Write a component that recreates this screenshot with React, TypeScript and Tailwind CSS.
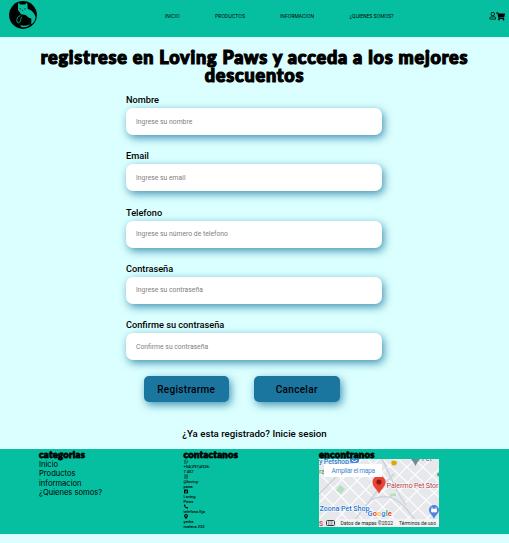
import React from "react";
import { FaRegUser, FaShoppingCart, FaWhatsapp, FaInstagram, FaFacebookSquare, FaPhoneAlt, FaMapMarkerAlt } from "react-icons/fa";

function Logo() {
  return (
    <svg viewBox="0 0 28 28" className="h-7 w-7 shrink-0">
      <circle cx="14" cy="14" r="13.9" fill="#000" />
      <path d="M9.2 1.5 11.2 3.600h4.800l2.200-2.100.6 6.500c4.200 1.200 7.700 5 7.700 9-.6 3.300-2.300 5.200-4.200 6.400V17.500l-3-1c-1.500-2.500-4-3.400-7-3-.8-.7-1.200-1.300-1.400-2.300-1.800-1.200-2.200-3-1.900-5.200Z" fill="#06bfa0" />
      <path d="M11.500 24.300c4 .8 7.700.1 10.200-1.300-2 2.300-5 3.600-8.200 3.300-1.300-.3-2.200-1-2-2Z" fill="#06bfa0" />
      <path d="M18 2c5 1.500 8.700 6 9 11.500" fill="none" stroke="#000" strokeWidth=".8" />
      <path d="M11.400 14.600c-2.700.7-3.700 3-3.500 5.300.1 2 1.700 2.600 2.900 1.300 1.300-1.600.6-4 2.100-5.500" fill="none" stroke="#06bfa0" strokeWidth=".8" />
      <path d="m10.700 7.500 1.500.7M15.200 8.200l1.500-.7M13.200 9.500h1" stroke="#000" strokeWidth=".7" />
    </svg>
  );
}

function Field({ label, placeholder, type = "text" }: { label: string; placeholder: string; type?: string }) {
  return (
    <label className="block h-[56.25px]">
      <span className="block h-[15px] text-[9.2px] leading-[14px] font-medium text-black">{label}</span>
      <input
        type={type}
        placeholder={placeholder}
        className="block h-[27px] w-full rounded-[7px] bg-white px-[10px] text-[6.8px] shadow-[2px_3px_8px_#1a759fc8] outline-none placeholder:text-[#808080]"
      />
    </label>
  );
}

function MapView() {
  return (
    <svg viewBox="0 0 120 68" className="block h-[68px] w-[120px] bg-[#e6e8ec]" fontFamily="Roboto, sans-serif">
      <g stroke="#fff" strokeWidth="1.1" fill="none">
        <path d="M-10 22 48 80M0 14 62 80M8 5 77 76M15-2 90 75M28-4 106 75M42-6 120 70M58-5 125 58M75-4 125 43M91-4 125 28" />
        <path d="M-5 49 48-5M-5 65 64-4M8 70 80-3M24 72 99-3M40 72 120-8M58 72 125 5M76 72 125 24M95 72 125 43" />
      </g>
      <path d="M0 35 35 0M29 70 59 31l16-16M52 41c17-9 30 0 40 15l14 15M63 0c7 12 11 29 24 46" fill="none" stroke="#cdd3dc" strokeWidth="1.5" />
      <path d="m17 31 4-5 5 4-4 5Zm54 4 6-1v3l-6 1Z" fill="#b7dfbd" />
      <text x="0" y="5" fontSize="7.2" fontWeight="500" fill="#2874c8" stroke="#fff" strokeWidth=".8" paintOrder="stroke" textLength="30">y Petshop</text>
      <rect x="31" y="-4" width="9" height="8" rx="2" fill="#4b82e8" /><path d="M33 1c1 2 4 2 5 0" stroke="#fff" fill="none" />
      <ellipse cx="75" cy="4" rx="2.8" ry="2.4" fill="#dca900" />
      <path d="M92 0h9l-3 4-1.500 3L95 4Z" fill="#708997" />
      <text x="103" y="2" fontSize="6.5" fill="#53636c">Pet</text>
      <text x="0" y="15" fontSize="7" fill="#41915b">ra</text>
      <circle cx="120" cy="15.5" r="2" fill="#41a96b" />
      <path d="M60 35c-1-4-6.500-7-6.500-12a6.500 6.500 0 0 1 13 0c0 5-5.500 8-6.500 12" fill="#ea4335" /><circle cx="60" cy="23" r="2.6" fill="#8f1712" />
      <text x="67.5" y="28.500" fontSize="7.4" fill="#b3363c" stroke="#fff" strokeWidth="1" paintOrder="stroke" textLength="52">Palermo Pet Stor</text>
      <text x=".5" y="52" fontSize="7.3" fontWeight="500" fill="#2874c8" stroke="#fff" strokeWidth="1" paintOrder="stroke" textLength="50">Zoona Pet Shop</text>
      <path d="M115 60c-1-4-5-5-5-9a5 5 0 0 1 10 0c0 4-4 5-5 9" fill="#5381db" /><path d="M112.500 50h5v3h-5zM113 50v-2M117 50v-2" fill="#fff" stroke="#fff" strokeWidth=".7" />
      <rect x="5" y="5" width="58" height="13" fill="#fff" /><text x="12.5" y="13.8" fontSize="6.6" fill="#4285d4" textLength="43.5">Ampliar el mapa</text>
      <text x="48.500" y="57" fontSize="7.6" fontWeight="700" stroke="#fff" strokeWidth="1" paintOrder="stroke">
        <tspan fill="#4285f4">G</tspan><tspan fill="#ea4335">o</tspan><tspan fill="#fbbc05">o</tspan><tspan fill="#4285f4">g</tspan><tspan fill="#34a853">l</tspan><tspan fill="#ea4335">e</tspan>
      </text>
      <rect y="60" x="17" width="103" height="8" fill="#f4f5f5" fillOpacity=".88" />
      <text x="0" y="67" fontSize="6.5" fontWeight="700" fill="#d44b49">S</text>
      <rect x="7.500" y="61.500" width="8" height="5" rx="1" fill="#e6e6e6" stroke="#34383c" /><path d="M9 63h5M9 65h5" stroke="#34383c" strokeWidth=".7" strokeDasharray="1 .5" />
      <text x="21.5" y="65.8" fontSize="5" fill="#222" textLength="52.5">Datos de mapas ©2022</text>
      <text x="80" y="65.8" fontSize="5" fill="#222" textLength="37">Términos de uso</text>
    </svg>
  );
}

const footTitle = "h-[10px] whitespace-nowrap font-[Lato] font-black text-[9.5px] leading-[11px] tracking-[0.25px] [-webkit-text-stroke:0.8px_#000]";

export default function App() {
  return (
    <div className="flex h-[543px] w-[509px] flex-col overflow-hidden bg-[#dbffff] font-[Roboto,sans-serif] text-black">
      <header className="flex h-[37px] shrink-0 items-start bg-[#06bfa0] pt-px pl-[9px]">
        <Logo />
        <nav className="flex pt-[11px] pl-[128px] font-[Inter] text-[4.8px] leading-[8px] whitespace-nowrap">
          <a className="w-[50px]">INICIO</a><a className="w-[65px]">PRODUCTOS</a><a className="w-[69.5px]">INFORMACION</a><a className="tracking-[-0.08px]">¿QUIENES SOMOS?</a>
        </nav>
        <div className="ml-auto flex pt-[11px] pr-[4px] text-[8px]"><FaRegUser size={7.5} /><FaShoppingCart size={9} /></div>
      </header>
      <main className="flex h-[412px] shrink-0 flex-col items-center">
        <h1 className="mt-[11px] h-[45px] text-center font-[Lato] text-[18px] leading-[18px] font-black tracking-[0.8px] whitespace-nowrap [-webkit-text-stroke:1.2px_#000]">
          registrese en Loving Paws y acceda a los mejores<br />descuentos
        </h1>
        <form className="mr-px w-[256px]">
          <Field label="Nombre" placeholder="Ingrese su nombre" />
          <Field label="Email" placeholder="Ingrese su email" />
          <Field label="Telefono" placeholder="Ingrese su número de telefono" />
          <Field label="Contraseña" placeholder="Ingrese su contraseña" type="password" />
          <Field label="Confirme su contraseña" placeholder="Confirme su contraseña" type="password" />
          <div className="flex gap-[25px] pt-[1.5px] pl-[17.5px]">
            {["Registrarme", "Cancelar"].map((label) => (
              <button type="button" key={label} className="h-[26.5px] w-[85.5px] rounded-[5px] bg-[#1a759f] text-[10px] font-medium tracking-[0.3px] shadow-[2px_3px_8px_#1a759fc8]">{label}</button>
            ))}
          </div>
        </form>
        <a className="mt-[24.5px] text-[9.7px] leading-[13px] font-medium">¿Ya esta registrado? Inicie sesion</a>
      </main>
      <footer className="flex h-[85px] shrink-0 bg-[#06bfa0] pl-[39px]">
        <section className="w-[144.5px]">
          <h2 className={footTitle}>categorias</h2>
          <nav className="flex flex-col pt-[0.5px] font-[Inter] text-[7.6px] leading-[9.5px]"><a>Inicio</a><a>Productos</a><a>informacion</a><a>¿Quienes somos?</a></nav>
        </section>
        <section className="w-[135.5px]">
          <h2 className={footTitle}>contactanos</h2>
          <div className="font-[Roboto] text-[4px] leading-[5.03px] font-medium whitespace-nowrap [&_svg]:h-[5.03px] [&_svg]:w-[4px]">
            <FaWhatsapp /><p>+54(297)4526-</p><p>7 457</p>
            <FaInstagram /><p>@loving-</p><p>paws</p>
            <FaFacebookSquare /><p>Loving</p><p>Paws</p>
            <FaPhoneAlt /><p>telefono fijo</p>
            <FaMapMarkerAlt /><p>yerba</p><p>malena 233</p>
          </div>
        </section>
        <section>
          <h2 className={footTitle}>encontranos</h2>
          <MapView />
        </section>
      </footer>
    </div>
  );
}
